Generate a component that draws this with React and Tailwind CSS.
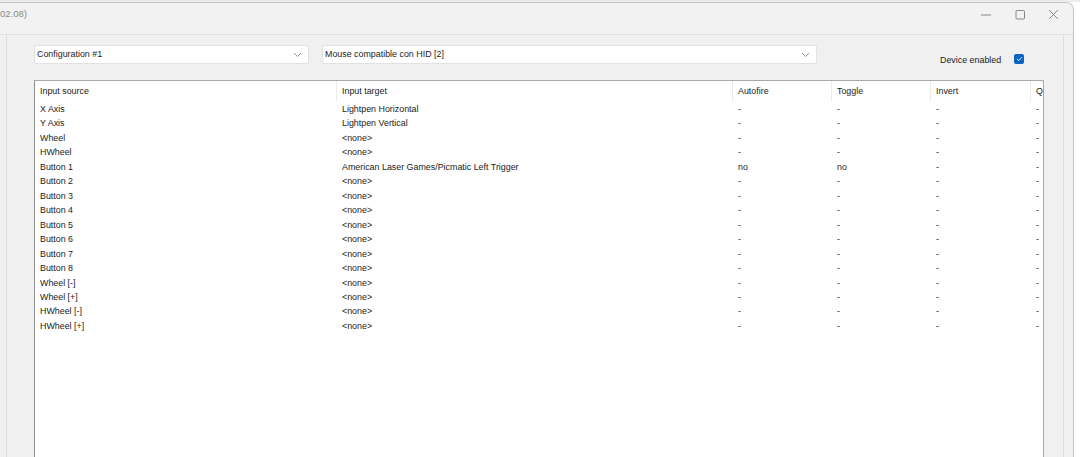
import React from 'react'

const rows = [
  ['X Axis', 'Lightpen Horizontal', '-', '-', '-', '-'],
  ['Y Axis', 'Lightpen Vertical', '-', '-', '-', '-'],
  ['Wheel', '<none>', '-', '-', '-', '-'],
  ['HWheel', '<none>', '-', '-', '-', '-'],
  ['Button 1', 'American Laser Games/Picmatic Left Trigger', 'no', 'no', '-', '-'],
  ['Button 2', '<none>', '-', '-', '-', '-'],
  ['Button 3', '<none>', '-', '-', '-', '-'],
  ['Button 4', '<none>', '-', '-', '-', '-'],
  ['Button 5', '<none>', '-', '-', '-', '-'],
  ['Button 6', '<none>', '-', '-', '-', '-'],
  ['Button 7', '<none>', '-', '-', '-', '-'],
  ['Button 8', '<none>', '-', '-', '-', '-'],
  ['Wheel [-]', '<none>', '-', '-', '-', '-'],
  ['Wheel [+]', '<none>', '-', '-', '-', '-'],
  ['HWheel [-]', '<none>', '-', '-', '-', '-'],
  ['HWheel [+]', '<none>', '-', '-', '-', '-'],
]

const cols = ['w-[302px]', 'w-[396px]', 'w-[99px]', 'w-[99px]', 'w-[100px]', 'w-[40px]']
const headers = ['Input source', 'Input target', 'Autofire', 'Toggle', 'Invert', 'Q']

function Chevron() {
  return (
    <svg width="9" height="6" viewBox="0 0 9 6" className="shrink-0">
      <polyline points="1,1 4.5,4.5 8,1" fill="none" stroke="#8a8a8a" strokeWidth="0.9" />
    </svg>
  )
}

function Combo({ width, label }) {
  return (
    <div className={`${width} h-[19px] bg-white border border-[#e2e2e2] rounded-[2px] flex items-center justify-between pl-[2px] pr-[6px]`}>
      <span className="text-[8.9px] text-[#1b1b1b]">{label}</span>
      <Chevron />
    </div>
  )
}

export default function App() {
  return (
    <div
      className="w-[1080px] h-[457px] bg-white overflow-hidden"
      style={{ fontFamily: '"Liberation Sans", Arial, sans-serif' }}
    >
      <div className="h-[2px] bg-[#ececec]" />
      <div className="w-[1074px] h-[455px] flex flex-col border-t border-r border-[#c4c4c4] rounded-tr-[8px] bg-[#f0f0f0] overflow-hidden">
        {/* title bar */}
        <div className="h-[32px] shrink-0 flex items-center bg-[#f2f2f2] border-b border-[#e0e0e0]">
          <span className="text-[9.5px] text-[#8a8a8a] -mt-[8px]">02.08)</span>
          <div className="ml-auto flex items-center -mt-[7px]">
            <svg width="34" height="12" viewBox="0 0 34 12">
              <line x1="12" y1="6" x2="22" y2="6" stroke="#7a7a7a" strokeWidth="0.9" />
            </svg>
            <svg width="34" height="12" viewBox="0 0 34 12">
              <rect x="13" y="1.5" width="8.5" height="8.5" rx="1" fill="none" stroke="#7a7a7a" strokeWidth="0.9" />
            </svg>
            <svg width="34" height="12" viewBox="0 0 34 12" className="mr-[2px]">
              <line x1="12" y1="1" x2="21" y2="10" stroke="#7a7a7a" strokeWidth="0.9" />
              <line x1="21" y1="1" x2="12" y2="10" stroke="#7a7a7a" strokeWidth="0.9" />
            </svg>
          </div>
        </div>

        {/* content panel */}
        <div className="flex-1 ml-[6px] w-[1058px] border-l border-r border-[#dcdcdc] bg-[#f0f0f0] pl-[27px] pt-[10px] flex flex-col">
          <div className="flex items-start">
            <Combo width="w-[275px]" label="Configuration #1" />
            <div className="w-[13px]" />
            <Combo width="w-[495px]" label="Mouse compatible con HID [2]" />
            <span className="ml-[123px] mt-[9px] text-[8.9px] text-[#1b1b1b]">Device enabled</span>
            <div className="ml-[13px] mt-[9px] w-[10px] h-[10px] rounded-[2px] bg-[#0a63c4] flex items-center justify-center">
              <svg width="7" height="6" viewBox="0 0 7 6">
                <polyline points="1,3 2.8,4.6 6,1.2" fill="none" stroke="white" strokeWidth="0.9" />
              </svg>
            </div>
          </div>

          <div className="mt-[13px] w-[1010px] flex-1 bg-white border-t border-r border-[#a8a8a8] border-l border-l-[#8f8f8f] overflow-hidden text-[8.9px] text-[#1b1b1b]">
            <div className="flex h-[21px] items-center">
              {headers.map((h, i) => (
                <div
                  key={h}
                  className={`${cols[i]} shrink-0 h-full flex items-center pl-[5px] ${i < 5 ? 'border-r border-[#ececec]' : ''}`}
                >
                  {h}
                </div>
              ))}
            </div>
            {rows.map((r) => (
              <div key={r[0]} className="flex h-[14.47px] items-center">
                {r.map((c, i) => (
                  <div key={i} className={`${cols[i]} shrink-0 whitespace-nowrap pl-[5px]`}>
                    {c}
                  </div>
                ))}
              </div>
            ))}
          </div>
        </div>
      </div>
    </div>
  )
}
